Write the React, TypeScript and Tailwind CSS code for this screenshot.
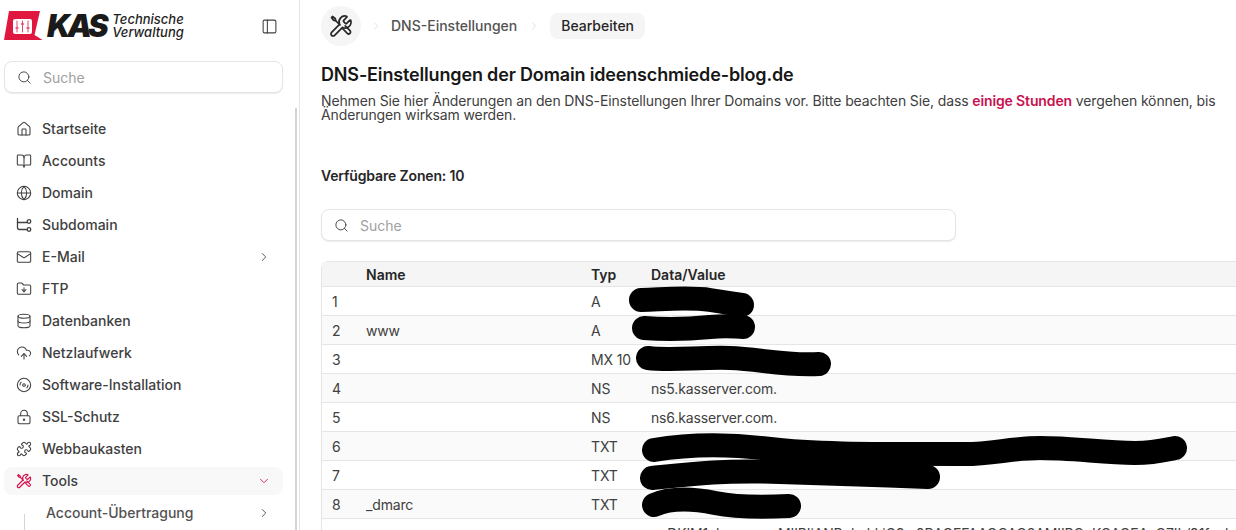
import React from 'react';
import {
  BookOpen,
  ChevronDown,
  ChevronRight,
  CloudUpload,
  Database,
  Disc3,
  FolderDown,
  Globe,
  House,
  LockKeyhole,
  Mail,
  PanelLeft,
  Puzzle,
  Search,
} from 'lucide-react';

const SubdomainIcon: React.FC<{ className?: string }> = ({ className }) => (
  <svg viewBox="0 0 16 16" fill="none" stroke="currentColor" strokeWidth="1.3" strokeLinecap="round" className={className}>
    <path d="M1.500 1.500v9a2 2 0 0 0 2 2h7.500" />
    <path d="M1.500 5.500h9.500" />
    <circle cx="13" cy="4.500" r="1.800" />
    <circle cx="13" cy="12.500" r="1.800" />
  </svg>
);

// Schraubenschlüssel und Schraubendreher gekreuzt
const ToolsIcon: React.FC<{ className?: string; strokeWidth?: number }> = ({ className, strokeWidth = 1.8 }) => (
  <svg viewBox="0 0 24 24" fill="none" stroke="currentColor" strokeWidth={strokeWidth} strokeLinecap="round" strokeLinejoin="round" className={className}>
    <path d="M14.700 6.300a1 1 0 0 0 0 1.400l1.600 1.600a1 1 0 0 0 1.400 0l3.106-3.105c.32-.322.863-.22.983.218a6 6 0 0 1-8.259 7.057l-7.910 7.910a1 1 0 0 1-2.999-3l7.910-7.910a6 6 0 0 1 7.057-8.259c.438.12.54.662.219.984z" />
    <path d="M11 11 7 7 4.500 6.200 2.500 3.500l1-1 2.700 2L7 7" />
    <path d="M13.500 14.500l4.800 4.800a1.900 1.900 0 0 0 2.700-2.700l-4.800-4.800" />
  </svg>
);

const navItems = [
  { label: 'Startseite', icon: House },
  { label: 'Accounts', icon: BookOpen },
  { label: 'Domain', icon: Globe },
  { label: 'Subdomain', icon: SubdomainIcon },
  { label: 'E-Mail', icon: Mail, arrow: true },
  { label: 'FTP', icon: FolderDown },
  { label: 'Datenbanken', icon: Database },
  { label: 'Netzlaufwerk', icon: CloudUpload },
  { label: 'Software-Installation', icon: Disc3 },
  { label: 'SSL-Schutz', icon: LockKeyhole },
  { label: 'Webbaukasten', icon: Puzzle },
];

const rows = [
  { id: '1', name: '', type: 'A', value: '' },
  { id: '2', name: 'www', type: 'A', value: '' },
  { id: '3', name: '', type: 'MX 10', value: '' },
  { id: '4', name: '', type: 'NS', value: 'ns5.kasserver.com.' },
  { id: '5', name: '', type: 'NS', value: 'ns6.kasserver.com.' },
  { id: '6', name: '', type: 'TXT', value: '' },
  { id: '7', name: '', type: 'TXT', value: '' },
  { id: '8', name: '_dmarc', type: 'TXT', value: '' },
  { id: '', name: '', type: '', value: 'v=DKIM1; k=rsa; p=MIIBIjANBgkqhkiG9w0BAQEFAAOCAQ8AMIIBCgKCAQEAxQ7IL/91fzglx' },
];

const Logo = () => (
  <div className="flex items-center">
    <svg width="40" height="30" viewBox="0 0 40 30" className="shrink-0">
      <path d="M5 0h31l-5.500 24 8 5H0z" fill="#e0173f" />
      <rect x="9" y="8" width="19" height="15" rx="2" fill="#fff" />
      <g stroke="#e0476a" strokeWidth="1" strokeLinecap="round">
        <path d="M13 10v11M18.500 10v11M24 10v11" />
        <path d="M12 17h2M17.500 13h2M23 17h2" strokeWidth="1.500" />
      </g>
    </svg>
    <span className="ml-[3px] text-[31px] leading-[30px] font-black italic tracking-[-3.2px] text-[#1a1a1a]">KAS</span>
    <div className="ml-[7px] text-[13px] leading-[13px] font-medium italic text-[#1f1f1f]">
      <div>Technische</div>
      <div>Verwaltung</div>
    </div>
  </div>
);

const SearchBox: React.FC<{ className: string }> = ({ className }) => (
  <div className={`flex h-[32px] items-center rounded-lg border border-neutral-200 bg-white shadow-[0_1px_1px_rgba(0,0,0,0.08)] ${className}`}>
    <Search className="ml-[12px] mr-[11px] h-[15px] w-[15px] text-neutral-700" strokeWidth={1.5} />
    <span className="pt-[1px] text-sm tracking-normal text-neutral-400">Suche</span>
  </div>
);

const Sidebar = () => (
  <aside className="relative h-full w-[300px] shrink-0 border-r border-neutral-200 bg-white">
    <div className="flex h-[61px] items-start justify-between pl-[4px] pr-[21px] pt-[11px]">
      <Logo />
      <PanelLeft className="mt-[7px] h-[17px] w-[17px] text-neutral-700" strokeWidth={1.5} />
    </div>
    <div className="pl-[4px] pr-[16px]">
      <SearchBox className="" />
    </div>
    <nav className="mt-[22px] flex flex-col gap-[4px] pl-[4px] pr-[16px]">
      {navItems.map(({ label, icon: Icon, arrow }) => (
        <div key={label} className="flex h-[28px] items-center pl-[12px] pr-[12px] text-sm font-medium text-neutral-700">
          <Icon className="mr-[10px] h-[16px] w-[16px] text-neutral-700" strokeWidth={1.6} />
          <span className="flex-1">{label}</span>
          {arrow && <ChevronRight className="h-[14px] w-[14px] text-neutral-700" strokeWidth={1.5} />}
        </div>
      ))}
      <div className="flex h-[28px] items-center rounded-lg bg-neutral-100/70 pl-[12px] pr-[12px] text-sm font-medium text-neutral-700">
        <ToolsIcon className="mr-[10px] h-[16px] w-[16px] text-[#d6144f]" />
        <span className="flex-1">Tools</span>
        <ChevronDown className="h-[14px] w-[14px] text-[#d6144f]" strokeWidth={1.5} />
      </div>
      <div className="flex h-[28px] items-center pl-[42px] pr-[12px] text-sm font-medium text-neutral-600">
        <span className="flex-1">Account-Übertragung</span>
        <ChevronRight className="h-[14px] w-[14px] text-neutral-700" strokeWidth={1.5} />
      </div>
    </nav>
    {/* Scrollbalken und Untermenü-Linie */}
    <div className="absolute bottom-0 right-[2px] top-[108px] w-[2px] bg-neutral-300" />
    <div className="absolute bottom-0 left-[24px] top-[514px] w-[1px] bg-neutral-300" />
  </aside>
);

const Scribbles = () => (
  <svg className="pointer-events-none absolute left-0 top-0" width="1236" height="530" fill="none" stroke="#000" strokeWidth="24" strokeLinecap="round" strokeLinejoin="round">
    <path d="M641 300C670 299 690 297 710 300S735 304 742 305" />
    <path d="M644 328C670 330 690 329 710 327S735 327 743 327" />
    <path d="M648 358C670 361 700 357 730 358S785 366 819 364" />
    <path d="M654 450C690 444 730 444 770 449S860 454 960 454C990 455 1010 448 1040 448S1100 452 1135 453C1155 453 1165 450 1175 448" />
    <path d="M652 478C690 474 720 470 780 472S880 475 928 477" />
    <path d="M654 505C670 498 690 498 715 503S770 507 789 506" />
  </svg>
);

const Main = () => (
  <main className="min-w-0 flex-1 pl-[21px]">
    <div className="flex h-[52px] items-center">
      <div className="flex h-[40px] w-[40px] items-center justify-center rounded-full bg-neutral-100">
        <ToolsIcon className="h-[24px] w-[24px] text-neutral-800" strokeWidth={1.7} />
      </div>
      <ChevronRight className="ml-[9px] h-[12px] w-[12px] text-neutral-300" strokeWidth={1.5} />
      <span className="ml-[9px] text-sm font-medium text-neutral-600">DNS-Einstellungen</span>
      <ChevronRight className="ml-[11px] h-[12px] w-[12px] text-neutral-300" strokeWidth={1.5} />
      <span className="ml-[10px] flex h-[26px] items-center rounded-lg bg-neutral-100 px-[11px] text-sm font-medium text-neutral-800">Bearbeiten</span>
    </div>
    <h1 className="mt-[11px] text-[18px] leading-[24px] font-semibold tracking-[-0.16px] text-neutral-900">DNS-Einstellungen der Domain ideenschmiede-blog.de</h1>
    <p className="mt-[7px] text-sm leading-[14px] tracking-[-0.125px] text-neutral-700">
      Nehmen Sie hier Änderungen an den DNS-Einstellungen Ihrer Domains vor. Bitte beachten Sie, dass{' '}
      <span className="font-semibold text-[#c8124f]">einige Stunden</span> vergehen können, bis Änderungen wirksam werden.
    </p>
    <div className="mt-[44px] text-sm leading-[20px] font-semibold tracking-[-0.15px] text-neutral-800">Verfügbare Zonen: 10</div>
    <SearchBox className="mt-[23px] w-[635px]" />
    <div className="mt-[20px] rounded-tl-lg border-l border-t border-neutral-200">
      <div className="grid h-[24px] grid-cols-[44px_225px_60px_1fr] items-center bg-neutral-100 pt-[1px] text-sm font-semibold text-neutral-800">
        <span />
        <span>Name</span>
        <span>Typ</span>
        <span>Data/Value</span>
      </div>
      {rows.map((row, index) => (
        <div
          key={index}
          className={`grid h-[29px] grid-cols-[44px_225px_60px_1fr] items-center border-t border-neutral-200 pt-[1px] text-sm tracking-[-0.15px] text-neutral-700 ${index % 2 === 0 ? 'bg-white' : 'bg-neutral-50'}`}
        >
          <span className="pl-[10px]">{row.id}</span>
          <span>{row.name}</span>
          <span className="whitespace-nowrap">{row.type}</span>
          <span className="whitespace-nowrap">{row.value}</span>
        </div>
      ))}
    </div>
  </main>
);

export default function App() {
  return (
    <div className="relative flex h-[530px] w-full overflow-hidden bg-white font-['Inter',sans-serif]">
      <Sidebar />
      <Main />
      <Scribbles />
    </div>
  );
}
